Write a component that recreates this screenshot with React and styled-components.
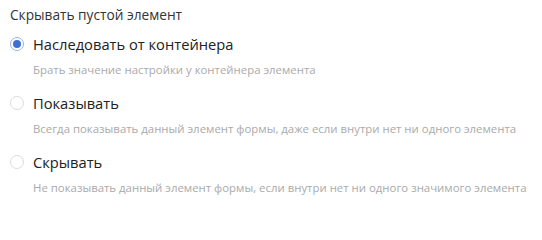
import React, { useState } from "react";
import styled, { createGlobalStyle } from "styled-components";

const GlobalStyle = createGlobalStyle`
  body {
    margin: 0;
    background: #fff;
    font-family: "Open Sans", "Noto Sans", sans-serif;
  }
`;

const Wrapper = styled.div`
  padding: 5px 10px 0 10px;
`;

const Title = styled.div`
  font-size: 13.7px;
  line-height: 19px;
  color: #333;
  margin-bottom: 10px;
`;

const Option = styled.label`
  display: block;
  cursor: pointer;
  margin-bottom: 15px;
`;

const Row = styled.div`
  display: flex;
  align-items: center;
  height: 20px;
`;

const Radio = styled.span`
  box-sizing: border-box;
  width: 14px;
  height: 14px;
  border-radius: 50%;
  border: 1px solid ${(p) => (p.checked ? "#9ab3e6" : "#dcdcdc")};
  display: flex;
  align-items: center;
  justify-content: center;
  margin-right: 9px;
  flex-shrink: 0;

  &::after {
    content: "";
    width: 8px;
    height: 8px;
    border-radius: 50%;
    background: #3f6fd0;
    display: ${(p) => (p.checked ? "block" : "none")};
  }
`;

const Label = styled.span`
  font-size: 14.7px;
  color: #222;
`;

const Description = styled.div`
  font-size: 11.4px;
  line-height: 16px;
  color: #aaa;
  margin-top: 8px;
  padding-left: 23px;
`;

const options = [
  {
    id: "inherit",
    label: "Наследовать от контейнера",
    desc: "Брать значение настройки у контейнера элемента",
  },
  {
    id: "show",
    label: "Показывать",
    desc: "Всегда показывать данный элемент формы, даже если внутри нет ни одного элемента",
  },
  {
    id: "hide",
    label: "Скрывать",
    desc: "Не показывать данный элемент формы, если внутри нет ни одного значимого элемента",
  },
];

export default function App() {
  const [value, setValue] = useState("inherit");
  return (
    <>
      <GlobalStyle />
      <Wrapper>
        <Title>Скрывать пустой элемент</Title>
        {options.map((o) => (
          <Option key={o.id} onClick={() => setValue(o.id)}>
            <Row>
              <Radio checked={value === o.id} />
              <Label>{o.label}</Label>
            </Row>
            <Description>{o.desc}</Description>
          </Option>
        ))}
      </Wrapper>
    </>
  );
}
